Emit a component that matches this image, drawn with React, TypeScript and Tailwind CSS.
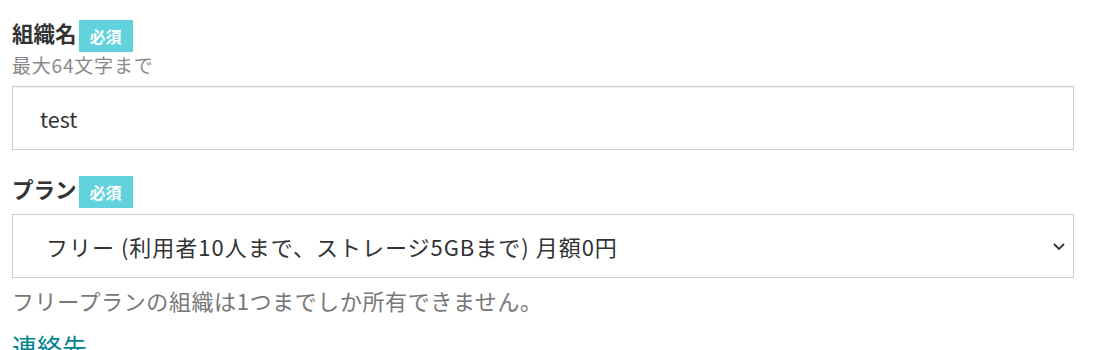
import { useState } from "react";

function RequiredBadge() {
  return (
    <span className="ml-[2px] flex h-[32px] w-[54px] items-center justify-center bg-[#62d3dd] text-[16px] font-bold leading-none text-white">
      必須
    </span>
  );
}

export default function App() {
  const [name, setName] = useState("test");
  const [plan, setPlan] = useState("free");

  return (
    <div
      className="min-h-screen bg-white px-[12px] pt-[20px] text-[#333]"
      style={{ fontFamily: '"Noto Sans CJK JP", "Noto Sans", sans-serif' }}
    >
      <div className="w-[1062px]">
        <div className="flex items-start">
          <label className="text-[21.5px] font-bold leading-[26px]">組織名</label>
          <RequiredBadge />
        </div>
        <p className="mt-[1px] text-[19px] leading-[24px] tracking-[0.8px] text-[#8a8a8a]">最大64文字まで</p>

        <input
          value={name}
          onChange={(e) => setName(e.target.value)}
          className="mt-[9px] block h-[64px] w-full border border-[#cccccc] px-[27px] text-[21.5px] text-[#333] shadow-[inset_0_1px_1px_rgba(0,0,0,0.06)] outline-none"
        />

        <div className="mt-[26px] flex items-start">
          <label className="text-[21.5px] font-bold leading-[26px]">プラン</label>
          <RequiredBadge />
        </div>

        <div className="relative mt-[6px]">
          <select
            value={plan}
            onChange={(e) => setPlan(e.target.value)}
            className="block h-[64px] w-full appearance-none border border-[#cccccc] bg-white pl-[33px] pr-[40px] text-[22px] tracking-[1px] text-[#333] outline-none"
          >
            <option value="free">フリー (利用者10人まで、ストレージ5GBまで) 月額0円</option>
          </select>
          <svg
            className="pointer-events-none absolute right-[8px] top-[28px]"
            width="14"
            height="9"
            viewBox="0 0 14 9"
            fill="none"
          >
            <path d="M2 2l5 5 5-5" stroke="#333" strokeWidth="1.8" />
          </svg>
        </div>

        <p className="mt-[7px] text-[22px] leading-[30px] tracking-[0.6px] text-[#777]">
          フリープランの組織は1つまでしか所有できません。
        </p>

        <h2 className="mt-[15px] text-[25px] leading-[32px] text-[#00838f]">連絡先</h2>
      </div>
    </div>
  );
}
